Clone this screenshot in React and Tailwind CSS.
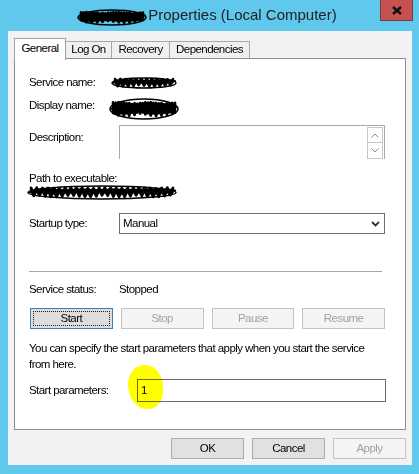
import React from "react";

const ui = { fontFamily: '"Liberation Sans", Arial, sans-serif' };

// black marker scribble used to hide names
function Scribble({ w, h, className = "", loop = true }) {
  const cy = h / 2;
  let d = "";
  const passes = 6;
  for (let p = 0; p < passes; p++) {
    const steps = Math.max(8, Math.round(w / 3));
    const amp = h * (0.1 + 0.07 * (p % 3));
    const off = (p - 2.5) * h * 0.05;
    for (let s = 0; s <= steps; s++) {
      const t = s / steps;
      const x = p % 2 === 0 ? 4 + (w - 8) * t : w - 4 - (w - 8) * t;
      const y = cy + off + (s % 2 ? amp : -amp) * (0.5 + 0.5 * Math.abs(Math.sin(s * 1.3 + p)));
      d += (d === "" ? "M" : "L") + x.toFixed(1) + " " + y.toFixed(1) + " ";
    }
  }
  return (
    <svg width={w} height={h} viewBox={`0 0 ${w} ${h}`} fill="none" stroke="#000" className={"overflow-visible " + className}>
      <path d={d} strokeWidth="2.6" strokeLinejoin="round" />
      {loop && <ellipse cx={w / 2} cy={cy + 1} rx={w / 2 - 1} ry={h / 2 - 1} strokeWidth="1.5" />}
      {loop && <path d={`M1 ${cy + 1} Q${w / 2} ${cy - h * 0.2} ${w - 1} ${cy - 1}`} strokeWidth="1.5" />}
    </svg>
  );
}

function Tab({ label, w, active }) {
  if (active) {
    return (
      <div className={`${w} h-[22px] -mb-[2px] relative z-10 bg-white border border-b-0 border-[#9e9e9e] flex items-center justify-center pb-[2px]`}>
        {label}
      </div>
    );
  }
  return (
    <div className={`${w} h-[17px] -ml-px bg-[#f0f0f0] border border-b-0 border-[#a8a8a8] flex items-center justify-center`}>
      {label}
    </div>
  );
}

function Btn({ children, disabled, focused, className = "" }) {
  if (focused) {
    return (
      <div className={`h-[21px] border border-[#3c7fb1] bg-[#dddddd] p-[2px] ${className}`}>
        <div className="h-full border border-dotted border-[#222] flex items-center justify-center">{children}</div>
      </div>
    );
  }
  return (
    <div
      className={`h-[21px] border flex items-center justify-center ${
        disabled ? "border-[#c3c3c3] bg-[#f4f4f4] text-[#a2a2a2]" : "border-[#acacac] bg-[#e1e1e1] text-black"
      } ${className}`}
    >
      {children}
    </div>
  );
}

export default function App() {
  return (
    <div
      className="w-[419px] h-[474px] bg-[#5fc8ec] flex flex-col pl-[8px] pr-[7px] pb-[9px] text-[11.5px] tracking-[-0.55px] text-black"
      style={ui}
    >
      {/* title bar */}
      <div className="h-[31px] relative flex items-center justify-center pr-[6px] tracking-normal">
        <Scribble w={70} h={17} className="mt-[1px]" />
        <span className="text-[15px] text-[#222] ml-[1px]">Properties (Local Computer)</span>
        <div className="absolute top-0 right-[-1px] w-[33px] h-[21px] bg-[#c75050] border border-t-0 border-[#6e4040] flex items-center justify-center">
          <svg width="10" height="9" viewBox="0 0 10 9">
            <path d="M1 1 L9 8 M9 1 L1 8" stroke="#111" strokeWidth="2.4" />
          </svg>
        </div>
      </div>

      {/* client area */}
      <div className="flex-1 bg-[#f3f1f3] flex flex-col pl-[6px] pr-[6px] pt-[7px]">
        <div className="flex items-end h-[20px]">
          <Tab label="General" w="w-[52px]" active />
          <Tab label="Log On" w="w-[47px]" />
          <Tab label="Recovery" w="w-[59px]" />
          <Tab label="Dependencies" w="w-[81px]" />
        </div>

        <div className="h-[372px] border border-[#8d8d8d] bg-white flex flex-col pl-[14px] pt-[16px]">
          <div className="h-[16px] flex items-center relative">
            <span>Service name:</span>
            <Scribble w={66} h={12} className="absolute left-[82px] top-[1px]" />
          </div>
          <div className="h-[16px] mt-[7px] flex items-center relative">
            <span>Display name:</span>
            <Scribble w={70} h={22} className="absolute left-[80px] top-[-1px]" />
          </div>
          <div className="mt-[11px] flex">
            <span className="w-[90px] pt-[4px] leading-[16px]">Description:</span>
            <div className="w-[266px] h-[34px] border border-b-0 border-[#a9a9a9] flex justify-end pt-px pr-px">
              <div className="w-[16px] flex flex-col">
                <div className="h-[16px] border border-[#c6c6c6] flex items-center justify-center">
                  <svg width="8" height="5" viewBox="0 0 8 5">
                    <path d="M0.5 4.5 L4 1 L7.5 4.5" fill="none" stroke="#8a8a8a" />
                  </svg>
                </div>
                <div className="h-[16px] border border-t-0 border-[#c6c6c6] flex items-center justify-center">
                  <svg width="8" height="5" viewBox="0 0 8 5">
                    <path d="M0.5 0.5 L4 4 L7.5 0.5" fill="none" stroke="#8a8a8a" />
                  </svg>
                </div>
              </div>
            </div>
          </div>
          <div className="h-[16px] mt-[12px] flex items-center">Path to executable:</div>
          <div className="h-[14px] relative">
            <Scribble w={150} h={15} className="absolute left-[-2px] top-[-3px]" />
          </div>
          <div className="mt-[12px] flex items-center">
            <span className="w-[90px]">Startup type:</span>
            <div className="w-[266px] h-[21px] border border-[#707070] flex items-center justify-between pl-[3px] pr-[4px]">
              <span>Manual</span>
              <svg width="9" height="6" viewBox="0 0 9 6">
                <path d="M1 1 L4.5 4.5 L8 1" fill="none" stroke="#333" strokeWidth="1.8" />
              </svg>
            </div>
          </div>
          <div className="mt-[37px] h-px w-[353px] bg-[#a6a6a6]" />
          <div className="h-[16px] mt-[10px] flex items-center">
            <span className="w-[90px]">Service status:</span>
            <span>Stopped</span>
          </div>
          <div className="mt-[10px] ml-px w-[355px] grid grid-cols-4 gap-[8px]">
            <Btn focused>Start</Btn>
            <Btn disabled>Stop</Btn>
            <Btn disabled>Pause</Btn>
            <Btn disabled>Resume</Btn>
          </div>
          <p className="mt-[11px] leading-[16px] whitespace-nowrap">
            You can specify the start parameters that apply when you start the service
            <br />
            from here.
          </p>
          <div className="mt-[7px] flex items-center relative">
            <span className="w-[108px]">Start parameters:</span>
            <div className="w-[249px] h-[23px] border border-[#6b6b6b] flex items-center pl-[3px]">1</div>
            <div className="absolute left-[99px] top-[-14px] w-[35px] h-[44px] bg-[#ffff00] mix-blend-multiply rounded-[45%_50%_40%_55%]" />
          </div>
        </div>

        <div className="mt-[8px] flex justify-end gap-[8px]">
          <Btn className="w-[73px]">OK</Btn>
          <Btn className="w-[73px]">Cancel</Btn>
          <Btn disabled className="w-[73px]">Apply</Btn>
        </div>
      </div>
    </div>
  );
}
